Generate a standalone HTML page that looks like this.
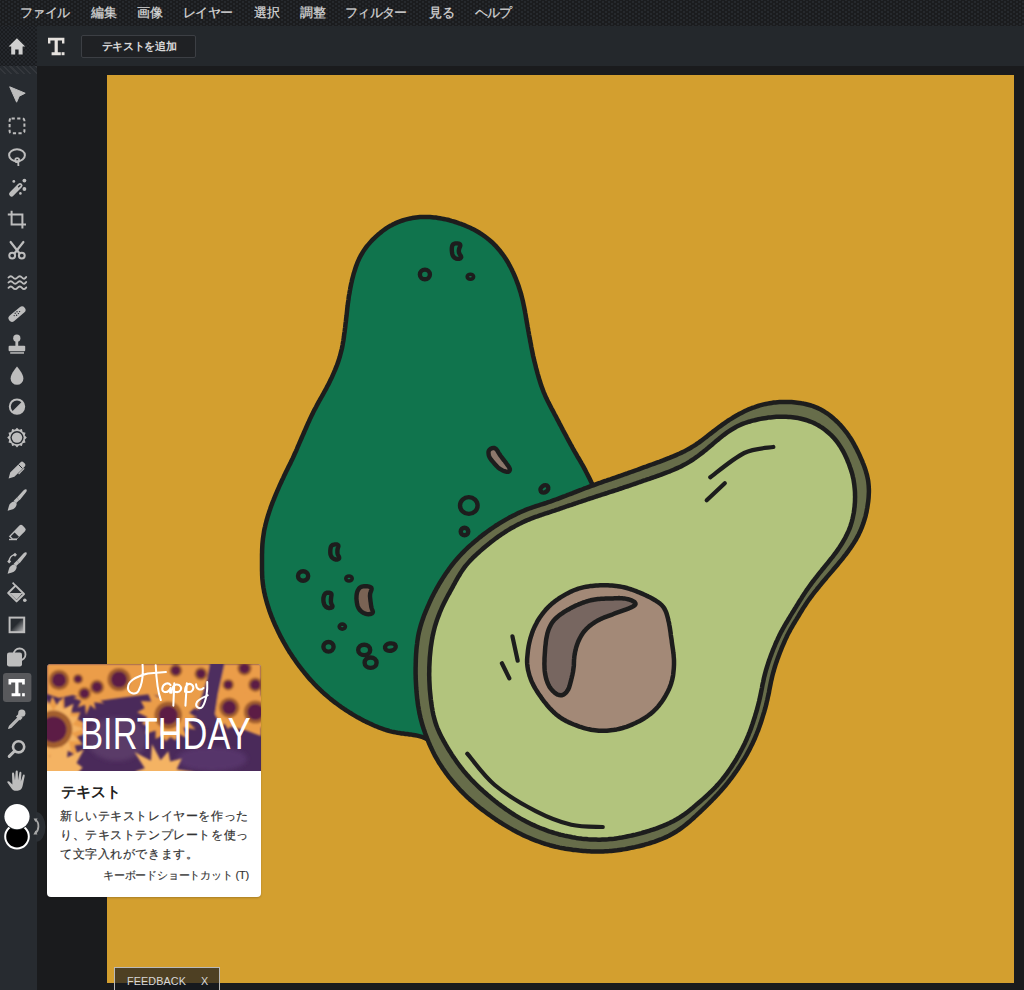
<!DOCTYPE html>
<html><head><meta charset="utf-8">
<style>
*{box-sizing:border-box}
html,body{margin:0;padding:0;width:1024px;height:990px;overflow:hidden;background:#1a1b1d;font-family:"Liberation Sans",sans-serif}
.abs{position:absolute}
#menu{left:0;top:0;width:1024px;height:26px;background:radial-gradient(circle,#26292d 0.9px,transparent 1.1px) 0 0/6px 4px,radial-gradient(circle,#26292d 0.9px,transparent 1.1px) 3px 2px/6px 4px,#1b1c1e}
#menu span{position:absolute;top:4px;font-size:13px;color:#d6d6d6;line-height:17px;white-space:nowrap;-webkit-text-stroke:0.25px #d6d6d6}
#tb{left:0;top:26px;width:1024px;height:40px;background:#24282c}
#home{left:0;top:26px;width:37px;height:40px;background:radial-gradient(circle,#1a1c1f 0.9px,transparent 1.1px) 0 0/4px 4px,radial-gradient(circle,#1a1c1f 0.9px,transparent 1.1px) 2px 2px/4px 4px,#24272c}
#hatch{left:0;top:66px;width:37px;height:8px;background:repeating-linear-gradient(45deg,#272b30 0 3px,#34373c 3px 4.5px)}
#addtxt{left:81px;top:35px;width:115px;height:23px;border:1px solid #3c3f44;border-radius:2px;background:#1f2124;color:#d8d8d8;font-size:11px;font-weight:bold;text-align:center;line-height:21px;letter-spacing:-0.3px;padding-left:1px}
#left{left:0;top:74px;width:37px;height:916px;background:#272b30}
#canvas{left:107px;top:75px;width:907px;height:908px;background:#d39f2f;overflow:hidden}
#card{left:47px;top:664px;width:214px;height:233px;background:#fff;border-radius:4px;overflow:hidden;box-shadow:0 1px 2px rgba(0,0,0,.2)}
#card h3{position:absolute;left:13.5px;top:118.5px;margin:0;font-size:14.5px;font-weight:bold;color:#222;line-height:18px}
#card p{position:absolute;left:13px;top:142.5px;letter-spacing:0.58px;-webkit-text-stroke:0.2px #333;width:210px;white-space:nowrap;margin:0;font-size:12px;color:#333;line-height:19px}
#card .kb{position:absolute;right:12px;top:204px;font-size:11px;letter-spacing:-0.2px;-webkit-text-stroke:0.15px #333;color:#333;line-height:14px}
#fb{left:114px;top:967px;width:106px;height:30px;border:1px solid #b9b9b9;background:rgba(22,24,30,.7);color:#d8d8d8;font-size:10.8px;letter-spacing:0.1px;line-height:14px}
</style></head><body>
<div id="menu" class="abs">
<span style="left:19.5px;letter-spacing:-0.5px">ファイル</span>
<span style="left:91px">編集</span>
<span style="left:137px">画像</span>
<span style="left:182.5px;letter-spacing:-0.5px">レイヤー</span>
<span style="left:254px">選択</span>
<span style="left:300px">調整</span>
<span style="left:345px;letter-spacing:-0.7px">フィルター</span>
<span style="left:429px">見る</span>
<span style="left:475px;letter-spacing:-0.8px">ヘルプ</span>
</div>
<div id="tb" class="abs"></div>
<div id="home" class="abs"></div>
<div id="hatch" class="abs"></div>
<svg class="abs" style="left:0;top:26px" width="80" height="40" viewBox="0 26 80 40">
<path d="M16.9 38.2 L25.2 46.6 L22.6 46.6 L22.6 54.4 L18.6 54.4 L18.6 49.6 L15.2 49.6 L15.2 54.4 L11.2 54.4 L11.2 46.6 L8.6 46.6 Z" fill="#cfcfcf"/>
<path d="M48 37.8 H64.4 V43.4 H62 V40.6 H57.8 V52.2 H60.8 V55.2 H51.6 V52.2 H54.6 V40.6 H50.4 V43.4 H48 Z" fill="#e6e2de"/>
<rect x="61.6" y="52.2" width="2.9" height="3" fill="#e6e2de"/>
</svg>

<div id="addtxt" class="abs">テキストを追加</div>
<div id="left" class="abs"></div>
<div id="canvas" class="abs"><svg width="907" height="908" viewBox="0 0 907 908" style="position:absolute;left:0;top:0"><path d="M321.0 141.9 L323.0 142.0 L325.0 142.2 L326.9 142.4 L328.9 142.6 L330.9 142.9 L332.9 143.2 L334.8 143.6 L336.8 144.0 L338.7 144.4 L340.7 144.8 L342.6 145.3 L344.5 145.9 L346.4 146.4 L348.3 147.0 L350.2 147.6 L352.1 148.3 L354.0 148.9 L355.9 149.7 L357.7 150.4 L359.6 151.2 L361.4 152.0 L363.2 152.8 L365.0 153.7 L366.8 154.6 L368.5 155.5 L370.3 156.5 L372.0 157.5 L373.7 158.6 L375.3 159.7 L377.0 160.8 L378.6 162.0 L380.2 163.2 L381.7 164.4 L383.2 165.7 L384.7 167.0 L386.2 168.4 L387.6 169.8 L389.0 171.2 L390.3 172.7 L391.6 174.2 L392.9 175.7 L394.1 177.3 L395.3 178.9 L396.5 180.5 L397.6 182.1 L398.7 183.8 L399.8 185.5 L400.8 187.2 L401.8 188.9 L402.7 190.7 L403.7 192.5 L404.6 194.2 L405.4 196.0 L406.3 197.8 L407.1 199.7 L407.9 201.5 L408.7 203.3 L409.4 205.2 L410.1 207.1 L410.8 208.9 L411.5 210.8 L412.1 212.7 L412.7 214.6 L413.3 216.5 L413.9 218.4 L414.4 220.4 L414.9 222.3 L415.4 224.2 L415.9 226.2 L416.3 228.1 L416.7 230.1 L417.1 232.0 L417.5 234.0 L417.9 236.0 L418.2 237.9 L418.6 239.9 L418.9 241.9 L419.2 243.8 L419.6 245.8 L419.9 247.8 L420.3 249.8 L420.6 251.7 L421.0 253.7 L421.3 255.7 L421.7 257.6 L422.0 259.6 L422.4 261.6 L422.8 263.5 L423.1 265.5 L423.5 267.5 L423.9 269.4 L424.2 271.4 L424.6 273.4 L425.0 275.3 L425.4 277.3 L425.8 279.2 L426.2 281.2 L426.7 283.1 L427.1 285.1 L427.6 287.0 L428.1 289.0 L428.6 290.9 L429.0 292.9 L429.6 294.8 L430.1 296.7 L430.6 298.6 L431.2 300.6 L431.7 302.5 L432.3 304.4 L432.9 306.3 L433.5 308.2 L434.1 310.1 L434.8 312.0 L435.5 313.9 L436.2 315.7 L436.9 317.6 L437.7 319.4 L438.5 321.3 L439.3 323.1 L440.2 324.9 L441.1 326.7 L442.0 328.4 L442.9 330.2 L443.8 332.0 L444.7 333.8 L445.7 335.5 L446.6 337.3 L447.5 339.1 L448.5 340.8 L449.4 342.6 L450.3 344.4 L451.3 346.2 L452.2 347.9 L453.1 349.7 L454.1 351.5 L455.0 353.2 L455.9 355.0 L456.9 356.8 L457.8 358.5 L458.8 360.3 L459.7 362.1 L460.6 363.8 L461.6 365.6 L462.5 367.3 L463.5 369.1 L464.5 370.8 L465.4 372.6 L466.4 374.3 L467.4 376.1 L468.4 377.8 L469.4 379.5 L470.4 381.3 L471.4 383.0 L472.4 384.7 L473.4 386.4 L474.4 388.2 L475.4 389.9 L476.4 391.7 L477.3 393.4 L478.3 395.2 L479.2 397.0 L480.1 398.7 L481.0 400.5 L481.9 402.3 L482.8 404.1 L483.7 405.9 L484.6 407.7 L485.5 409.4 L486.4 411.2 L487.4 413.0 L488.4 414.7 L489.4 416.4 L490.4 418.1 L491.5 419.8 L492.6 421.5 L493.7 423.2 L494.8 424.8 L495.9 426.5 L497.0 428.1 L498.1 429.8 L499.2 431.4 L500.3 433.1 L501.4 434.8 L502.5 436.5 L503.5 438.2 L504.5 439.9 L505.5 441.7 L506.4 443.4 L507.3 445.2 L508.2 447.0 L509.0 448.8 L509.8 450.6 L510.5 452.5 L511.1 454.4 L511.7 456.3 L512.2 458.2 L512.7 460.1 L513.1 462.0 L513.4 464.0 L513.7 466.0 L513.9 467.9 L514.0 469.9 L514.0 471.9 L514.0 473.9 L513.9 475.8 L513.7 477.8 L513.5 479.8 L513.2 481.7 L512.8 483.7 L512.4 485.6 L511.9 487.6 L511.4 489.5 L510.9 491.4 L510.3 493.3 L509.7 495.2 L509.1 497.1 L508.4 499.0 L507.7 500.9 L507.0 502.8 L506.3 504.6 L505.6 506.5 L504.8 508.3 L504.0 510.2 L503.3 512.0 L502.5 513.8 L501.6 515.7 L500.8 517.5 L500.0 519.3 L499.1 521.1 L498.3 522.9 L497.4 524.7 L496.5 526.5 L495.7 528.3 L494.8 530.1 L493.9 531.9 L493.0 533.7 L492.1 535.5 L491.1 537.2 L490.2 539.0 L489.3 540.8 L488.3 542.5 L487.4 544.3 L486.4 546.1 L485.5 547.8 L484.5 549.6 L483.5 551.3 L482.5 553.0 L481.5 554.8 L480.5 556.5 L479.5 558.2 L478.5 560.0 L477.5 561.7 L476.5 563.4 L475.5 565.1 L474.4 566.9 L473.4 568.6 L472.4 570.3 L471.3 572.0 L470.3 573.7 L469.2 575.4 L468.1 577.1 L467.1 578.7 L466.0 580.4 L464.9 582.1 L463.8 583.8 L462.7 585.5 L461.6 587.1 L460.5 588.8 L459.4 590.4 L458.3 592.1 L457.1 593.7 L456.0 595.4 L454.8 597.0 L453.7 598.7 L452.5 600.3 L451.4 601.9 L450.2 603.5 L449.0 605.1 L447.8 606.7 L446.6 608.3 L445.4 609.9 L444.1 611.5 L442.9 613.1 L441.7 614.6 L440.4 616.2 L439.1 617.7 L437.8 619.2 L436.5 620.7 L435.2 622.2 L433.8 623.7 L432.5 625.2 L431.1 626.6 L429.7 628.0 L428.3 629.4 L426.8 630.8 L425.3 632.1 L423.8 633.4 L422.3 634.7 L420.8 636.0 L419.2 637.2 L417.6 638.4 L416.0 639.6 L414.4 640.8 L412.7 641.9 L411.1 643.0 L409.4 644.1 L407.7 645.2 L406.0 646.2 L404.3 647.2 L402.5 648.2 L400.8 649.1 L399.0 650.1 L397.2 651.0 L395.4 651.8 L393.6 652.7 L391.8 653.6 L390.0 654.4 L388.2 655.2 L386.3 656.0 L384.5 656.7 L382.6 657.5 L380.8 658.2 L378.9 658.9 L377.0 659.6 L375.1 660.2 L373.2 660.9 L371.3 661.5 L369.4 662.2 L367.5 662.8 L365.6 663.4 L363.7 664.0 L361.8 664.5 L359.9 665.1 L358.0 665.7 L356.1 666.2 L354.1 666.8 L352.2 667.3 L350.3 667.8 L348.3 668.3 L346.4 668.8 L344.5 669.2 L342.6 669.6 L340.6 669.9 L338.7 670.1 L336.8 670.1 L335.0 670.0 L333.1 669.8 L331.3 669.4 L329.5 668.9 L327.8 668.2 L326.1 667.4 L324.4 666.5 L322.7 665.6 L321.0 664.7 L319.3 663.8 L317.6 663.0 L315.8 662.2 L314.0 661.6 L312.1 661.1 L310.2 660.6 L308.3 660.2 L306.3 659.9 L304.4 659.6 L302.4 659.4 L300.4 659.1 L298.4 658.9 L296.4 658.6 L294.5 658.4 L292.5 658.1 L290.5 657.8 L288.6 657.4 L286.6 657.0 L284.7 656.6 L282.7 656.1 L280.8 655.5 L278.9 655.0 L277.0 654.3 L275.1 653.7 L273.3 653.0 L271.4 652.3 L269.6 651.5 L267.7 650.8 L265.9 650.0 L264.1 649.1 L262.3 648.3 L260.5 647.4 L258.7 646.6 L256.9 645.7 L255.1 644.7 L253.3 643.8 L251.6 642.8 L249.8 641.9 L248.1 640.9 L246.4 639.9 L244.7 638.8 L243.0 637.8 L241.3 636.7 L239.6 635.6 L237.9 634.5 L236.3 633.4 L234.6 632.3 L233.0 631.1 L231.4 630.0 L229.8 628.8 L228.2 627.6 L226.6 626.4 L225.0 625.1 L223.4 623.9 L221.9 622.6 L220.4 621.3 L218.9 620.0 L217.4 618.7 L215.9 617.4 L214.4 616.0 L213.0 614.6 L211.5 613.2 L210.1 611.8 L208.7 610.4 L207.3 609.0 L206.0 607.5 L204.6 606.0 L203.3 604.6 L201.9 603.1 L200.6 601.5 L199.4 600.0 L198.1 598.5 L196.8 596.9 L195.6 595.4 L194.4 593.8 L193.1 592.2 L191.9 590.6 L190.7 589.0 L189.6 587.4 L188.4 585.7 L187.3 584.1 L186.1 582.5 L185.0 580.8 L183.9 579.1 L182.8 577.5 L181.8 575.8 L180.7 574.1 L179.7 572.4 L178.7 570.6 L177.7 568.9 L176.7 567.2 L175.7 565.4 L174.8 563.6 L173.8 561.9 L172.9 560.1 L172.0 558.3 L171.2 556.5 L170.3 554.7 L169.5 552.9 L168.6 551.1 L167.8 549.3 L167.0 547.4 L166.2 545.6 L165.5 543.7 L164.7 541.9 L164.0 540.0 L163.3 538.1 L162.6 536.3 L162.0 534.4 L161.4 532.5 L160.8 530.6 L160.2 528.7 L159.6 526.7 L159.1 524.8 L158.6 522.9 L158.1 521.0 L157.7 519.0 L157.2 517.1 L156.9 515.1 L156.5 513.1 L156.2 511.2 L155.9 509.2 L155.7 507.2 L155.5 505.2 L155.3 503.2 L155.2 501.2 L155.1 499.3 L155.1 497.3 L155.0 495.3 L155.0 493.3 L155.0 491.3 L155.0 489.3 L155.0 487.3 L155.0 485.3 L155.0 483.3 L155.0 481.3 L155.0 479.3 L155.1 477.3 L155.1 475.3 L155.2 473.3 L155.3 471.3 L155.4 469.3 L155.6 467.3 L155.8 465.3 L156.0 463.3 L156.3 461.4 L156.6 459.4 L156.9 457.4 L157.2 455.4 L157.6 453.5 L158.1 451.5 L158.5 449.6 L159.0 447.7 L159.5 445.7 L160.1 443.8 L160.6 441.9 L161.2 440.0 L161.8 438.1 L162.4 436.2 L163.1 434.3 L163.7 432.4 L164.4 430.5 L165.1 428.6 L165.8 426.8 L166.6 424.9 L167.3 423.1 L168.1 421.2 L168.8 419.4 L169.6 417.5 L170.4 415.7 L171.2 413.9 L172.0 412.0 L172.8 410.2 L173.6 408.4 L174.5 406.6 L175.3 404.7 L176.2 402.9 L177.0 401.1 L177.9 399.3 L178.7 397.5 L179.6 395.7 L180.5 393.9 L181.4 392.1 L182.3 390.3 L183.2 388.6 L184.0 386.8 L184.9 385.0 L185.8 383.1 L186.6 381.3 L187.4 379.5 L188.2 377.7 L189.1 375.9 L189.9 374.0 L190.6 372.2 L191.4 370.4 L192.2 368.5 L193.0 366.7 L193.8 364.8 L194.6 363.0 L195.4 361.2 L196.2 359.3 L197.0 357.5 L197.8 355.7 L198.6 353.8 L199.4 352.0 L200.2 350.2 L201.0 348.3 L201.9 346.5 L202.7 344.7 L203.5 342.9 L204.4 341.1 L205.3 339.3 L206.1 337.5 L207.0 335.7 L208.0 333.9 L208.9 332.2 L209.8 330.4 L210.8 328.6 L211.7 326.9 L212.7 325.2 L213.7 323.4 L214.7 321.7 L215.7 319.9 L216.6 318.2 L217.6 316.4 L218.6 314.7 L219.5 312.9 L220.4 311.1 L221.4 309.4 L222.3 307.6 L223.1 305.8 L224.0 304.0 L224.9 302.2 L225.7 300.4 L226.5 298.5 L227.3 296.7 L228.1 294.9 L228.8 293.0 L229.6 291.2 L230.3 289.3 L231.0 287.4 L231.6 285.5 L232.2 283.6 L232.8 281.7 L233.3 279.8 L233.8 277.9 L234.3 275.9 L234.8 274.0 L235.2 272.0 L235.6 270.1 L235.9 268.1 L236.3 266.1 L236.6 264.2 L236.9 262.2 L237.1 260.2 L237.4 258.2 L237.7 256.3 L237.9 254.3 L238.2 252.3 L238.4 250.3 L238.6 248.3 L238.9 246.3 L239.1 244.3 L239.3 242.4 L239.6 240.4 L239.8 238.4 L240.0 236.4 L240.2 234.4 L240.4 232.4 L240.7 230.4 L240.9 228.4 L241.2 226.5 L241.5 224.5 L241.7 222.5 L242.0 220.5 L242.4 218.6 L242.7 216.6 L243.1 214.6 L243.4 212.7 L243.8 210.7 L244.2 208.7 L244.7 206.8 L245.1 204.8 L245.6 202.9 L246.1 201.0 L246.6 199.0 L247.2 197.1 L247.8 195.2 L248.4 193.3 L249.0 191.4 L249.7 189.6 L250.4 187.7 L251.2 185.9 L252.0 184.1 L252.9 182.3 L253.8 180.5 L254.8 178.8 L255.8 177.1 L256.9 175.4 L258.0 173.8 L259.2 172.2 L260.4 170.6 L261.7 169.1 L263.0 167.6 L264.3 166.1 L265.7 164.7 L267.1 163.3 L268.6 161.9 L270.0 160.6 L271.5 159.3 L273.1 158.0 L274.6 156.7 L276.2 155.5 L277.8 154.4 L279.5 153.2 L281.1 152.2 L282.8 151.1 L284.6 150.2 L286.3 149.3 L288.1 148.4 L289.9 147.6 L291.8 146.8 L293.6 146.1 L295.5 145.5 L297.4 144.9 L299.3 144.4 L301.3 143.9 L303.2 143.5 L305.1 143.1 L307.1 142.8 L309.1 142.5 L311.1 142.3 L313.0 142.1 L315.0 142.0 L317.0 141.9 L319.0 141.9Z" fill="#10744d" stroke="#1d1d1d" stroke-width="4.5" stroke-linejoin="round" stroke-linecap="round"/>
<ellipse cx="317.9" cy="199.4" rx="5.0" ry="4.8" transform="rotate(0 317.9 199.4)" fill="#10744d" stroke="#1d1d1d" stroke-width="4.4" stroke-linejoin="round" stroke-linecap="round"/>
<ellipse cx="363.4" cy="201.7" rx="3.2" ry="2.5" transform="rotate(0 363.4 201.7)" fill="#10744d" stroke="#1d1d1d" stroke-width="3.6" stroke-linejoin="round" stroke-linecap="round"/>
<ellipse cx="361.8" cy="430.5" rx="8.8" ry="8.4" transform="rotate(0 361.8 430.5)" fill="#10744d" stroke="#1d1d1d" stroke-width="4.4" stroke-linejoin="round" stroke-linecap="round"/>
<ellipse cx="357.5" cy="456.5" rx="3.8" ry="3.8" transform="rotate(0 357.5 456.5)" fill="#10744d" stroke="#1d1d1d" stroke-width="4.4" stroke-linejoin="round" stroke-linecap="round"/>
<ellipse cx="437.4" cy="413.9" rx="4.3" ry="3.3" transform="rotate(-35 437.4 413.9)" fill="#10744d" stroke="#1d1d1d" stroke-width="4.4" stroke-linejoin="round" stroke-linecap="round"/>
<ellipse cx="196.1" cy="501.0" rx="5.1" ry="4.7" transform="rotate(0 196.1 501.0)" fill="#10744d" stroke="#1d1d1d" stroke-width="4.4" stroke-linejoin="round" stroke-linecap="round"/>
<ellipse cx="242.0" cy="503.5" rx="3.2" ry="2.5" transform="rotate(0 242.0 503.5)" fill="#10744d" stroke="#1d1d1d" stroke-width="3.6" stroke-linejoin="round" stroke-linecap="round"/>
<ellipse cx="235.3" cy="551.6" rx="3.1" ry="2.5" transform="rotate(0 235.3 551.6)" fill="#10744d" stroke="#1d1d1d" stroke-width="3.6" stroke-linejoin="round" stroke-linecap="round"/>
<ellipse cx="221.5" cy="571.8" rx="5.1" ry="4.8" transform="rotate(0 221.5 571.8)" fill="#10744d" stroke="#1d1d1d" stroke-width="4.4" stroke-linejoin="round" stroke-linecap="round"/>
<ellipse cx="257.2" cy="574.9" rx="6.0" ry="5.2" transform="rotate(0 257.2 574.9)" fill="#10744d" stroke="#1d1d1d" stroke-width="4.4" stroke-linejoin="round" stroke-linecap="round"/>
<ellipse cx="263.6" cy="587.7" rx="6.0" ry="5.2" transform="rotate(0 263.6 587.7)" fill="#10744d" stroke="#1d1d1d" stroke-width="4.4" stroke-linejoin="round" stroke-linecap="round"/>
<ellipse cx="283.4" cy="572.1" rx="5.4" ry="3.7" transform="rotate(-10 283.4 572.1)" fill="#10744d" stroke="#1d1d1d" stroke-width="4.4" stroke-linejoin="round" stroke-linecap="round"/>
<path d="M348.5 168.4 L349.5 168.4 L350.5 168.4 L351.5 168.6 L352.4 168.9 L353.1 169.5 L353.3 170.3 L353.2 171.2 L352.8 172.1 L352.4 173.0 L352.1 174.0 L351.9 175.0 L351.8 176.0 L351.9 177.0 L352.1 177.9 L352.5 178.8 L353.0 179.7 L353.6 180.5 L354.0 181.4 L354.2 182.2 L353.8 182.9 L353.1 183.5 L352.1 183.8 L351.2 183.9 L350.2 183.9 L349.2 183.7 L348.3 183.2 L347.5 182.7 L346.8 182.0 L346.2 181.2 L345.7 180.3 L345.4 179.3 L345.2 178.4 L345.0 177.4 L344.9 176.4 L344.8 175.4 L344.8 174.4 L344.8 173.4 L344.9 172.4 L345.1 171.4 L345.4 170.4 L345.9 169.6 L346.7 169.0 L347.5 168.6Z" fill="#10744d" stroke="#1d1d1d" stroke-width="4.4" stroke-linejoin="round" stroke-linecap="round"/>
<path d="M227.0 469.6 L228.0 469.4 L229.0 469.4 L230.0 469.5 L230.8 469.9 L231.3 470.5 L231.4 471.4 L231.1 472.4 L230.8 473.3 L230.6 474.3 L230.4 475.3 L230.4 476.3 L230.4 477.3 L230.5 478.3 L230.7 479.3 L231.1 480.2 L231.6 481.1 L232.0 482.0 L232.2 482.9 L232.0 483.6 L231.3 484.2 L230.4 484.5 L229.4 484.6 L228.4 484.5 L227.4 484.2 L226.5 483.7 L225.8 483.1 L225.0 482.4 L224.4 481.6 L224.0 480.7 L223.6 479.7 L223.4 478.7 L223.3 477.7 L223.3 476.7 L223.3 475.7 L223.4 474.7 L223.5 473.7 L223.7 472.7 L224.0 471.7 L224.5 470.9 L225.2 470.2 L226.0 469.8Z" fill="#10744d" stroke="#1d1d1d" stroke-width="4.4" stroke-linejoin="round" stroke-linecap="round"/>
<path d="M220.0 517.7 L221.0 517.6 L222.0 517.7 L223.0 517.9 L223.8 518.3 L224.4 519.0 L224.5 519.9 L224.4 520.8 L224.2 521.8 L224.1 522.8 L224.0 523.8 L223.9 524.9 L223.9 525.9 L223.9 526.9 L224.1 527.9 L224.4 528.8 L224.9 529.7 L225.3 530.6 L225.5 531.5 L225.2 532.2 L224.4 532.6 L223.5 532.9 L222.5 533.0 L221.5 533.0 L220.5 532.7 L219.7 532.3 L218.9 531.7 L218.2 530.9 L217.6 530.1 L217.2 529.2 L216.9 528.2 L216.6 527.2 L216.5 526.2 L216.4 525.2 L216.4 524.2 L216.4 523.2 L216.6 522.2 L216.9 521.2 L217.2 520.2 L217.7 519.4 L218.3 518.6 L219.1 518.0Z" fill="#10744d" stroke="#1d1d1d" stroke-width="4.4" stroke-linejoin="round" stroke-linecap="round"/>
<path d="M255.0 511.6 L256.0 511.4 L257.0 511.3 L258.0 511.3 L259.0 511.3 L260.0 511.3 L261.0 511.4 L262.0 511.6 L262.9 511.9 L263.8 512.3 L264.4 512.9 L264.6 513.8 L264.5 514.7 L264.2 515.6 L263.8 516.5 L263.5 517.5 L263.2 518.4 L263.1 519.4 L263.0 520.4 L263.0 521.4 L263.1 522.4 L263.2 523.4 L263.3 524.4 L263.4 525.4 L263.5 526.4 L263.7 527.4 L263.8 528.4 L263.9 529.4 L264.1 530.4 L264.2 531.4 L264.4 532.4 L264.7 533.4 L265.0 534.3 L265.4 535.2 L265.7 536.1 L265.9 537.0 L265.6 537.8 L265.0 538.4 L264.2 538.8 L263.2 539.0 L262.2 539.2 L261.2 539.2 L260.2 539.1 L259.3 539.0 L258.3 538.7 L257.4 538.3 L256.5 537.9 L255.6 537.3 L254.8 536.8 L254.0 536.1 L253.3 535.5 L252.6 534.7 L252.0 533.9 L251.5 533.1 L251.1 532.2 L250.7 531.2 L250.4 530.3 L250.2 529.3 L250.0 528.3 L249.8 527.3 L249.7 526.3 L249.6 525.3 L249.5 524.3 L249.4 523.3 L249.5 522.3 L249.5 521.3 L249.6 520.3 L249.7 519.3 L249.9 518.3 L250.1 517.4 L250.4 516.4 L250.8 515.5 L251.3 514.6 L251.8 513.8 L252.5 513.0 L253.2 512.4 L254.1 511.9Z" fill="#7a6354" stroke="#1d1d1d" stroke-width="4.4" stroke-linejoin="round" stroke-linecap="round"/>
<path d="M382.2 375.1 L382.8 374.4 L383.6 373.8 L384.5 373.4 L385.4 373.1 L386.4 372.9 L387.4 373.0 L388.3 373.4 L389.0 374.0 L389.7 374.7 L390.3 375.5 L390.8 376.4 L391.3 377.3 L391.8 378.1 L392.4 379.0 L392.9 379.8 L393.5 380.7 L394.1 381.5 L394.7 382.3 L395.3 383.1 L395.9 383.9 L396.5 384.7 L397.2 385.5 L397.8 386.3 L398.4 387.1 L399.0 387.9 L399.6 388.8 L400.2 389.6 L400.8 390.4 L401.4 391.2 L401.9 392.0 L402.4 392.9 L402.8 393.8 L402.9 394.8 L402.6 395.6 L402.1 396.3 L401.3 396.7 L400.4 396.8 L399.4 396.7 L398.4 396.5 L397.5 396.1 L396.5 395.8 L395.6 395.4 L394.7 394.9 L393.8 394.4 L392.9 393.9 L392.1 393.3 L391.3 392.7 L390.6 392.0 L389.9 391.3 L389.2 390.6 L388.5 389.8 L387.8 389.1 L387.1 388.3 L386.5 387.5 L385.8 386.8 L385.2 386.0 L384.5 385.2 L383.9 384.4 L383.4 383.6 L382.8 382.7 L382.4 381.8 L382.0 380.9 L381.7 379.9 L381.6 378.9 L381.5 377.9 L381.5 376.9 L381.7 376.0Z" fill="#8d786c" stroke="#1d1d1d" stroke-width="4.4" stroke-linejoin="round" stroke-linecap="round"/>
<path d="M678.5 326.9 L680.5 326.9 L682.5 327.0 L684.5 327.1 L686.5 327.3 L688.5 327.5 L690.4 327.7 L692.4 327.9 L694.4 328.3 L696.4 328.6 L698.3 329.0 L700.2 329.5 L702.2 330.0 L704.1 330.5 L706.0 331.2 L707.8 331.9 L709.7 332.6 L711.5 333.4 L713.3 334.3 L715.0 335.2 L716.7 336.2 L718.4 337.3 L720.1 338.4 L721.7 339.5 L723.3 340.7 L724.8 342.0 L726.3 343.3 L727.8 344.6 L729.3 346.0 L730.7 347.3 L732.1 348.8 L733.5 350.2 L734.8 351.7 L736.1 353.2 L737.4 354.8 L738.6 356.3 L739.8 357.9 L741.0 359.5 L742.1 361.2 L743.2 362.8 L744.3 364.5 L745.3 366.2 L746.3 368.0 L747.3 369.7 L748.2 371.5 L749.2 373.2 L750.1 375.0 L750.9 376.8 L751.8 378.6 L752.7 380.4 L753.5 382.3 L754.3 384.1 L755.1 385.9 L755.8 387.8 L756.6 389.7 L757.3 391.5 L757.9 393.4 L758.6 395.3 L759.1 397.2 L759.7 399.1 L760.2 401.1 L760.6 403.0 L761.0 404.9 L761.3 406.9 L761.5 408.9 L761.7 410.9 L761.8 412.8 L761.9 414.8 L761.9 416.8 L761.8 418.8 L761.7 420.8 L761.6 422.8 L761.4 424.8 L761.2 426.7 L760.9 428.7 L760.6 430.7 L760.3 432.7 L759.9 434.6 L759.6 436.6 L759.1 438.6 L758.7 440.5 L758.2 442.4 L757.6 444.3 L757.0 446.2 L756.4 448.1 L755.7 450.0 L755.0 451.9 L754.3 453.7 L753.5 455.6 L752.6 457.4 L751.8 459.2 L750.9 461.0 L749.9 462.7 L749.0 464.5 L747.9 466.2 L746.9 467.9 L745.8 469.6 L744.7 471.2 L743.6 472.9 L742.4 474.5 L741.3 476.1 L740.1 477.7 L738.9 479.3 L737.6 480.9 L736.4 482.5 L735.2 484.1 L733.9 485.6 L732.6 487.2 L731.4 488.7 L730.1 490.3 L728.8 491.8 L727.5 493.3 L726.2 494.8 L724.9 496.4 L723.6 497.9 L722.3 499.4 L721.0 500.9 L719.7 502.4 L718.4 504.0 L717.1 505.5 L715.8 507.0 L714.5 508.6 L713.3 510.1 L712.0 511.7 L710.7 513.2 L709.5 514.8 L708.2 516.4 L707.0 517.9 L705.8 519.5 L704.6 521.1 L703.4 522.7 L702.2 524.3 L701.0 526.0 L699.9 527.6 L698.8 529.3 L697.7 531.0 L696.6 532.6 L695.5 534.3 L694.5 536.0 L693.4 537.7 L692.4 539.5 L691.4 541.2 L690.3 542.9 L689.3 544.6 L688.2 546.3 L687.2 548.0 L686.2 549.7 L685.2 551.5 L684.2 553.2 L683.2 554.9 L682.3 556.7 L681.3 558.5 L680.4 560.2 L679.6 562.0 L678.7 563.9 L677.9 565.7 L677.1 567.5 L676.3 569.3 L675.5 571.2 L674.7 573.0 L674.0 574.9 L673.2 576.8 L672.5 578.6 L671.8 580.5 L671.1 582.4 L670.4 584.3 L669.8 586.1 L669.1 588.0 L668.5 589.9 L667.9 591.8 L667.3 593.8 L666.8 595.7 L666.2 597.6 L665.7 599.5 L665.2 601.5 L664.8 603.4 L664.3 605.4 L663.9 607.3 L663.5 609.3 L663.1 611.3 L662.7 613.2 L662.3 615.2 L662.0 617.2 L661.6 619.1 L661.1 621.1 L660.7 623.0 L660.3 625.0 L659.8 626.9 L659.4 628.9 L658.9 630.8 L658.4 632.8 L657.8 634.7 L657.3 636.6 L656.7 638.5 L656.1 640.4 L655.5 642.4 L654.9 644.3 L654.3 646.2 L653.7 648.1 L653.0 650.0 L652.4 651.8 L651.7 653.7 L651.0 655.6 L650.2 657.5 L649.5 659.3 L648.7 661.2 L648.0 663.0 L647.2 664.8 L646.3 666.7 L645.5 668.5 L644.6 670.3 L643.7 672.1 L642.8 673.9 L641.9 675.6 L640.9 677.4 L640.0 679.1 L639.0 680.9 L638.0 682.6 L637.0 684.3 L635.9 686.0 L634.9 687.7 L633.8 689.4 L632.7 691.1 L631.6 692.8 L630.5 694.5 L629.4 696.1 L628.2 697.7 L627.0 699.4 L625.9 701.0 L624.7 702.6 L623.5 704.2 L622.2 705.8 L621.0 707.4 L619.8 708.9 L618.5 710.5 L617.2 712.0 L615.9 713.5 L614.6 715.0 L613.3 716.5 L611.9 718.0 L610.6 719.5 L609.2 720.9 L607.8 722.4 L606.4 723.8 L605.0 725.3 L603.6 726.7 L602.2 728.1 L600.8 729.5 L599.4 730.9 L597.9 732.3 L596.5 733.7 L595.0 735.1 L593.6 736.5 L592.1 737.9 L590.7 739.2 L589.2 740.6 L587.7 741.9 L586.3 743.3 L584.8 744.6 L583.3 745.9 L581.7 747.2 L580.2 748.5 L578.7 749.8 L577.1 751.0 L575.5 752.2 L573.9 753.4 L572.2 754.6 L570.6 755.7 L568.9 756.8 L567.2 757.8 L565.5 758.8 L563.7 759.8 L562.0 760.7 L560.2 761.6 L558.4 762.4 L556.5 763.2 L554.7 764.0 L552.9 764.7 L551.0 765.4 L549.1 766.1 L547.2 766.8 L545.3 767.4 L543.4 768.0 L541.5 768.6 L539.6 769.1 L537.6 769.7 L535.7 770.2 L533.8 770.7 L531.8 771.2 L529.9 771.6 L527.9 772.1 L526.0 772.5 L524.0 772.9 L522.1 773.3 L520.1 773.7 L518.1 774.1 L516.2 774.4 L514.2 774.7 L512.2 775.0 L510.2 775.3 L508.2 775.5 L506.2 775.7 L504.2 775.9 L502.3 776.1 L500.3 776.2 L498.3 776.3 L496.3 776.4 L494.3 776.5 L492.3 776.5 L490.3 776.5 L488.3 776.5 L486.3 776.4 L484.3 776.4 L482.3 776.3 L480.3 776.2 L478.3 776.0 L476.3 775.9 L474.3 775.7 L472.3 775.6 L470.3 775.3 L468.3 775.1 L466.3 774.9 L464.3 774.6 L462.4 774.3 L460.4 774.0 L458.4 773.7 L456.4 773.3 L454.5 773.0 L452.5 772.6 L450.6 772.1 L448.6 771.7 L446.7 771.2 L444.7 770.7 L442.8 770.2 L440.9 769.6 L439.0 769.1 L437.0 768.5 L435.1 767.8 L433.3 767.2 L431.4 766.5 L429.5 765.8 L427.6 765.1 L425.8 764.4 L423.9 763.6 L422.1 762.8 L420.2 762.0 L418.4 761.2 L416.6 760.4 L414.8 759.5 L413.0 758.6 L411.2 757.7 L409.4 756.8 L407.7 755.8 L405.9 754.9 L404.2 753.9 L402.4 752.9 L400.7 751.9 L399.0 750.9 L397.3 749.9 L395.6 748.8 L393.9 747.7 L392.2 746.7 L390.5 745.6 L388.8 744.5 L387.2 743.3 L385.5 742.2 L383.9 741.0 L382.3 739.9 L380.6 738.7 L379.0 737.5 L377.4 736.3 L375.8 735.1 L374.2 733.9 L372.7 732.7 L371.1 731.4 L369.5 730.2 L368.0 728.9 L366.5 727.6 L365.0 726.3 L363.4 725.0 L362.0 723.7 L360.5 722.3 L359.0 720.9 L357.6 719.5 L356.2 718.1 L354.8 716.7 L353.4 715.3 L352.0 713.8 L350.7 712.3 L349.3 710.8 L348.0 709.3 L346.7 707.8 L345.4 706.3 L344.2 704.7 L342.9 703.1 L341.7 701.6 L340.5 700.0 L339.3 698.4 L338.1 696.7 L337.0 695.1 L335.8 693.5 L334.7 691.8 L333.6 690.1 L332.5 688.5 L331.5 686.8 L330.5 685.0 L329.4 683.3 L328.5 681.6 L327.5 679.8 L326.6 678.0 L325.7 676.2 L324.9 674.4 L324.0 672.6 L323.2 670.8 L322.4 669.0 L321.6 667.1 L320.9 665.3 L320.1 663.4 L319.4 661.5 L318.7 659.7 L318.0 657.8 L317.4 655.9 L316.7 654.0 L316.1 652.1 L315.5 650.2 L314.9 648.3 L314.4 646.3 L313.9 644.4 L313.4 642.5 L313.0 640.5 L312.5 638.6 L312.2 636.6 L311.8 634.6 L311.5 632.7 L311.1 630.7 L310.8 628.7 L310.6 626.7 L310.3 624.7 L310.1 622.8 L309.9 620.8 L309.7 618.8 L309.5 616.8 L309.4 614.8 L309.2 612.8 L309.1 610.8 L309.0 608.8 L308.9 606.8 L308.8 604.8 L308.7 602.8 L308.7 600.8 L308.6 598.8 L308.6 596.8 L308.6 594.8 L308.6 592.8 L308.7 590.8 L308.7 588.8 L308.8 586.8 L308.8 584.8 L308.9 582.8 L309.0 580.8 L309.1 578.8 L309.3 576.8 L309.4 574.8 L309.6 572.8 L309.8 570.8 L310.1 568.8 L310.3 566.8 L310.6 564.9 L310.9 562.9 L311.2 560.9 L311.6 559.0 L312.0 557.0 L312.5 555.1 L313.0 553.1 L313.5 551.2 L314.1 549.3 L314.7 547.4 L315.3 545.5 L316.0 543.6 L316.6 541.7 L317.3 539.8 L318.1 538.0 L318.8 536.1 L319.6 534.3 L320.4 532.4 L321.2 530.6 L322.0 528.8 L322.8 526.9 L323.7 525.1 L324.5 523.3 L325.4 521.5 L326.3 519.7 L327.2 518.0 L328.2 516.2 L329.1 514.4 L330.1 512.7 L331.1 511.0 L332.1 509.2 L333.1 507.5 L334.2 505.8 L335.2 504.1 L336.3 502.4 L337.4 500.7 L338.5 499.1 L339.6 497.4 L340.8 495.8 L341.9 494.1 L343.1 492.5 L344.3 490.9 L345.5 489.3 L346.7 487.8 L348.0 486.2 L349.3 484.7 L350.6 483.2 L351.9 481.7 L353.3 480.2 L354.7 478.7 L356.1 477.3 L357.5 475.9 L358.9 474.5 L360.3 473.1 L361.8 471.7 L363.3 470.4 L364.8 469.1 L366.3 467.8 L367.8 466.4 L369.3 465.2 L370.9 463.9 L372.4 462.6 L374.0 461.4 L375.6 460.1 L377.2 458.9 L378.8 457.7 L380.4 456.5 L382.0 455.4 L383.6 454.2 L385.3 453.1 L386.9 452.0 L388.6 450.8 L390.3 449.8 L392.0 448.7 L393.7 447.6 L395.4 446.6 L397.1 445.6 L398.8 444.6 L400.6 443.6 L402.3 442.6 L404.1 441.7 L405.9 440.8 L407.7 439.9 L409.5 439.0 L411.3 438.1 L413.1 437.3 L414.9 436.5 L416.8 435.7 L418.6 434.9 L420.5 434.2 L422.3 433.5 L424.2 432.8 L426.1 432.2 L428.0 431.5 L429.9 430.9 L431.8 430.3 L433.7 429.7 L435.6 429.1 L437.5 428.5 L439.4 427.9 L441.3 427.2 L443.2 426.6 L445.1 425.9 L447.0 425.2 L448.9 424.5 L450.8 423.8 L452.6 423.1 L454.5 422.4 L456.4 421.7 L458.2 421.0 L460.1 420.2 L462.0 419.5 L463.8 418.8 L465.7 418.1 L467.6 417.3 L469.4 416.6 L471.3 415.9 L473.2 415.2 L475.0 414.5 L476.9 413.7 L478.8 413.0 L480.7 412.3 L482.5 411.6 L484.4 410.9 L486.3 410.3 L488.2 409.6 L490.1 408.9 L492.0 408.2 L493.8 407.6 L495.7 406.9 L497.6 406.2 L499.5 405.6 L501.4 404.9 L503.3 404.3 L505.2 403.6 L507.1 403.0 L509.0 402.3 L510.9 401.6 L512.8 401.0 L514.7 400.3 L516.5 399.7 L518.4 399.0 L520.3 398.4 L522.2 397.7 L524.1 397.0 L526.0 396.3 L527.9 395.7 L529.8 395.0 L531.6 394.3 L533.5 393.6 L535.4 392.9 L537.3 392.2 L539.2 391.6 L541.0 390.9 L542.9 390.2 L544.8 389.5 L546.7 388.8 L548.6 388.1 L550.5 387.4 L552.3 386.8 L554.2 386.1 L556.1 385.4 L558.0 384.6 L559.8 383.9 L561.7 383.2 L563.6 382.4 L565.4 381.7 L567.3 380.9 L569.1 380.1 L570.9 379.3 L572.7 378.5 L574.6 377.6 L576.3 376.8 L578.1 375.9 L579.9 374.9 L581.6 374.0 L583.4 373.0 L585.1 371.9 L586.8 370.9 L588.5 369.8 L590.1 368.7 L591.8 367.6 L593.4 366.4 L595.0 365.2 L596.6 364.0 L598.2 362.8 L599.8 361.6 L601.4 360.3 L602.9 359.1 L604.5 357.9 L606.1 356.6 L607.7 355.4 L609.2 354.2 L610.8 353.0 L612.4 351.8 L614.1 350.6 L615.7 349.4 L617.3 348.3 L619.0 347.1 L620.6 346.0 L622.3 344.9 L624.0 343.9 L625.7 342.8 L627.4 341.8 L629.1 340.8 L630.9 339.8 L632.6 338.8 L634.4 337.9 L636.2 337.0 L638.0 336.1 L639.8 335.2 L641.6 334.4 L643.5 333.7 L645.3 332.9 L647.2 332.3 L649.1 331.6 L651.0 331.0 L652.9 330.4 L654.8 329.9 L656.7 329.4 L658.7 329.0 L660.6 328.6 L662.6 328.2 L664.6 327.9 L666.6 327.6 L668.5 327.4 L670.5 327.2 L672.5 327.1 L674.5 327.0 L676.5 326.9Z" fill="#676d4a" stroke="#1d1d1d" stroke-width="4.5" stroke-linejoin="round" stroke-linecap="round"/>
<path d="M683.3 342.0 L685.3 342.2 L687.2 342.5 L689.2 342.8 L691.2 343.1 L693.1 343.5 L695.1 344.0 L697.0 344.5 L698.9 345.0 L700.8 345.6 L702.6 346.3 L704.5 347.0 L706.3 347.8 L708.1 348.6 L709.9 349.6 L711.6 350.5 L713.3 351.6 L715.0 352.6 L716.6 353.8 L718.2 355.0 L719.7 356.2 L721.2 357.5 L722.7 358.8 L724.2 360.2 L725.6 361.6 L726.9 363.0 L728.2 364.5 L729.5 366.1 L730.7 367.7 L731.8 369.3 L732.9 370.9 L734.0 372.6 L735.0 374.3 L736.0 376.0 L736.9 377.8 L737.8 379.6 L738.7 381.4 L739.5 383.2 L740.3 385.0 L741.0 386.9 L741.8 388.7 L742.5 390.6 L743.1 392.5 L743.8 394.4 L744.4 396.3 L745.0 398.2 L745.5 400.1 L745.9 402.0 L746.4 404.0 L746.7 405.9 L747.0 407.9 L747.3 409.9 L747.5 411.9 L747.7 413.8 L747.9 415.8 L748.0 417.8 L748.0 419.8 L748.1 421.8 L748.0 423.8 L748.0 425.8 L747.9 427.8 L747.7 429.8 L747.6 431.8 L747.3 433.7 L747.1 435.7 L746.8 437.7 L746.4 439.6 L746.0 441.6 L745.6 443.5 L745.1 445.5 L744.6 447.4 L744.0 449.3 L743.4 451.2 L742.7 453.1 L742.0 454.9 L741.2 456.7 L740.3 458.5 L739.5 460.3 L738.6 462.1 L737.6 463.9 L736.6 465.6 L735.6 467.3 L734.6 469.0 L733.5 470.7 L732.4 472.4 L731.3 474.0 L730.2 475.7 L729.0 477.3 L727.8 478.9 L726.6 480.5 L725.4 482.1 L724.1 483.6 L722.9 485.2 L721.6 486.8 L720.4 488.3 L719.1 489.9 L717.9 491.4 L716.6 493.0 L715.3 494.5 L714.1 496.1 L712.8 497.7 L711.6 499.2 L710.3 500.8 L709.1 502.4 L707.9 503.9 L706.7 505.5 L705.4 507.1 L704.3 508.7 L703.1 510.3 L701.9 512.0 L700.8 513.6 L699.6 515.2 L698.5 516.9 L697.4 518.6 L696.3 520.2 L695.2 521.9 L694.2 523.6 L693.1 525.3 L692.0 527.0 L691.0 528.7 L689.9 530.4 L688.9 532.1 L687.8 533.8 L686.8 535.5 L685.7 537.2 L684.7 538.9 L683.6 540.6 L682.6 542.3 L681.6 544.0 L680.5 545.8 L679.5 547.5 L678.5 549.2 L677.5 550.9 L676.5 552.7 L675.5 554.4 L674.6 556.2 L673.6 557.9 L672.7 559.7 L671.9 561.5 L671.0 563.3 L670.2 565.1 L669.3 567.0 L668.5 568.8 L667.8 570.6 L667.0 572.5 L666.2 574.3 L665.5 576.2 L664.8 578.0 L664.1 579.9 L663.4 581.8 L662.7 583.7 L662.0 585.6 L661.4 587.5 L660.8 589.4 L660.2 591.3 L659.6 593.2 L659.0 595.1 L658.5 597.0 L658.0 598.9 L657.5 600.9 L657.0 602.8 L656.6 604.8 L656.2 606.7 L655.7 608.7 L655.3 610.7 L655.0 612.6 L654.6 614.6 L654.2 616.5 L653.8 618.5 L653.4 620.5 L653.0 622.4 L652.5 624.4 L652.1 626.3 L651.6 628.3 L651.1 630.2 L650.6 632.1 L650.1 634.1 L649.6 636.0 L649.0 637.9 L648.4 639.8 L647.9 641.7 L647.3 643.6 L646.6 645.6 L646.0 647.5 L645.4 649.3 L644.7 651.2 L644.1 653.1 L643.4 655.0 L642.7 656.9 L641.9 658.7 L641.2 660.6 L640.4 662.4 L639.6 664.3 L638.8 666.1 L638.0 667.9 L637.1 669.7 L636.2 671.5 L635.3 673.3 L634.4 675.0 L633.4 676.8 L632.5 678.6 L631.5 680.3 L630.5 682.0 L629.5 683.8 L628.5 685.5 L627.4 687.2 L626.3 688.9 L625.3 690.5 L624.2 692.2 L623.1 693.9 L621.9 695.5 L620.8 697.2 L619.6 698.8 L618.4 700.4 L617.2 702.0 L616.0 703.5 L614.7 705.1 L613.4 706.6 L612.1 708.1 L610.8 709.6 L609.4 711.1 L608.1 712.6 L606.7 714.0 L605.3 715.4 L603.8 716.8 L602.4 718.2 L600.9 719.6 L599.5 720.9 L598.0 722.3 L596.5 723.6 L595.0 724.9 L593.5 726.2 L592.0 727.5 L590.5 728.8 L588.9 730.1 L587.4 731.4 L585.9 732.7 L584.3 734.0 L582.8 735.2 L581.2 736.5 L579.6 737.7 L578.0 738.9 L576.4 740.0 L574.7 741.1 L573.1 742.2 L571.4 743.3 L569.7 744.3 L567.9 745.3 L566.2 746.2 L564.4 747.1 L562.6 748.0 L560.8 748.8 L559.0 749.7 L557.1 750.4 L555.3 751.2 L553.4 751.9 L551.5 752.6 L549.7 753.3 L547.8 754.0 L545.9 754.6 L544.0 755.2 L542.1 755.8 L540.2 756.4 L538.2 757.0 L536.3 757.5 L534.4 758.1 L532.5 758.6 L530.5 759.1 L528.6 759.6 L526.7 760.0 L524.7 760.5 L522.8 760.9 L520.8 761.3 L518.8 761.7 L516.9 762.1 L514.9 762.5 L512.9 762.8 L511.0 763.1 L509.0 763.4 L507.0 763.7 L505.0 763.9 L503.0 764.1 L501.0 764.3 L499.1 764.4 L497.1 764.5 L495.1 764.6 L493.1 764.7 L491.1 764.7 L489.1 764.6 L487.1 764.6 L485.1 764.5 L483.1 764.4 L481.1 764.3 L479.1 764.1 L477.1 763.9 L475.1 763.7 L473.2 763.4 L471.2 763.2 L469.2 762.9 L467.2 762.5 L465.3 762.2 L463.3 761.8 L461.3 761.4 L459.4 761.0 L457.4 760.6 L455.5 760.1 L453.5 759.7 L451.6 759.2 L449.7 758.6 L447.8 758.1 L445.8 757.5 L443.9 756.9 L442.0 756.3 L440.1 755.6 L438.3 754.9 L436.4 754.2 L434.5 753.5 L432.7 752.8 L430.8 752.0 L429.0 751.2 L427.2 750.4 L425.4 749.6 L423.5 748.7 L421.7 747.8 L420.0 746.9 L418.2 746.0 L416.4 745.1 L414.7 744.1 L412.9 743.1 L411.2 742.1 L409.5 741.1 L407.8 740.1 L406.1 739.0 L404.4 737.9 L402.8 736.8 L401.1 735.7 L399.4 734.6 L397.8 733.4 L396.2 732.2 L394.6 731.1 L393.0 729.9 L391.4 728.7 L389.8 727.4 L388.2 726.2 L386.7 725.0 L385.1 723.7 L383.6 722.4 L382.0 721.1 L380.5 719.9 L379.0 718.5 L377.5 717.2 L376.0 715.9 L374.5 714.5 L373.0 713.2 L371.6 711.8 L370.1 710.4 L368.7 709.0 L367.3 707.6 L365.9 706.2 L364.5 704.8 L363.1 703.3 L361.8 701.8 L360.5 700.4 L359.1 698.8 L357.8 697.3 L356.6 695.8 L355.3 694.2 L354.1 692.7 L352.9 691.1 L351.7 689.5 L350.5 687.9 L349.3 686.2 L348.2 684.6 L347.1 682.9 L345.9 681.3 L344.8 679.6 L343.8 677.9 L342.7 676.2 L341.6 674.5 L340.6 672.8 L339.6 671.1 L338.6 669.4 L337.6 667.6 L336.6 665.9 L335.7 664.1 L334.7 662.4 L333.8 660.6 L332.9 658.8 L332.1 657.0 L331.3 655.2 L330.5 653.3 L329.8 651.5 L329.1 649.6 L328.5 647.7 L327.9 645.8 L327.4 643.9 L326.9 642.0 L326.4 640.0 L326.0 638.1 L325.6 636.1 L325.3 634.2 L324.9 632.2 L324.6 630.2 L324.3 628.2 L324.1 626.3 L323.8 624.3 L323.6 622.3 L323.4 620.3 L323.2 618.3 L323.0 616.3 L322.8 614.3 L322.7 612.3 L322.6 610.3 L322.5 608.3 L322.4 606.3 L322.3 604.3 L322.3 602.3 L322.2 600.3 L322.2 598.3 L322.3 596.3 L322.3 594.3 L322.3 592.3 L322.4 590.3 L322.5 588.4 L322.6 586.4 L322.7 584.4 L322.8 582.4 L323.0 580.4 L323.2 578.4 L323.4 576.4 L323.6 574.4 L323.8 572.4 L324.1 570.4 L324.4 568.5 L324.7 566.5 L325.0 564.5 L325.4 562.5 L325.7 560.6 L326.2 558.6 L326.6 556.7 L327.1 554.7 L327.6 552.8 L328.1 550.9 L328.7 549.0 L329.3 547.1 L329.9 545.2 L330.6 543.3 L331.3 541.4 L332.0 539.6 L332.7 537.7 L333.5 535.9 L334.3 534.0 L335.1 532.2 L335.9 530.4 L336.8 528.6 L337.7 526.8 L338.6 525.0 L339.5 523.2 L340.4 521.5 L341.4 519.7 L342.4 518.0 L343.3 516.2 L344.3 514.5 L345.3 512.7 L346.2 510.9 L347.2 509.2 L348.1 507.4 L349.1 505.7 L350.1 503.9 L351.0 502.2 L352.1 500.5 L353.1 498.8 L354.2 497.1 L355.3 495.4 L356.4 493.8 L357.6 492.2 L358.8 490.6 L360.1 489.1 L361.4 487.6 L362.7 486.1 L364.1 484.7 L365.5 483.2 L366.9 481.8 L368.4 480.5 L369.8 479.1 L371.3 477.8 L372.8 476.4 L374.3 475.1 L375.8 473.8 L377.3 472.5 L378.8 471.2 L380.4 469.9 L381.9 468.7 L383.5 467.4 L385.1 466.2 L386.7 465.0 L388.3 463.8 L389.9 462.6 L391.5 461.4 L393.1 460.3 L394.8 459.2 L396.5 458.1 L398.1 457.0 L399.8 455.9 L401.5 454.9 L403.2 453.8 L405.0 452.8 L406.7 451.9 L408.5 450.9 L410.2 450.0 L412.0 449.0 L413.8 448.2 L415.6 447.3 L417.4 446.4 L419.2 445.6 L421.1 444.8 L422.9 444.1 L424.8 443.3 L426.6 442.6 L428.5 441.9 L430.4 441.3 L432.3 440.6 L434.2 440.0 L436.1 439.3 L438.0 438.7 L439.9 438.1 L441.8 437.5 L443.7 436.8 L445.6 436.2 L447.5 435.6 L449.4 434.9 L451.3 434.3 L453.1 433.6 L455.0 433.0 L456.9 432.3 L458.8 431.7 L460.7 431.0 L462.6 430.4 L464.5 429.8 L466.4 429.1 L468.3 428.5 L470.2 427.8 L472.1 427.2 L474.0 426.6 L475.9 425.9 L477.8 425.3 L479.7 424.7 L481.6 424.0 L483.5 423.4 L485.4 422.8 L487.3 422.2 L489.2 421.5 L491.1 420.9 L493.0 420.3 L494.9 419.7 L496.8 419.1 L498.7 418.5 L500.6 417.9 L502.5 417.2 L504.4 416.6 L506.3 416.0 L508.2 415.4 L510.1 414.8 L512.0 414.1 L513.9 413.5 L515.8 412.9 L517.7 412.2 L519.6 411.6 L521.5 411.0 L523.4 410.3 L525.3 409.7 L527.2 409.0 L529.1 408.4 L531.0 407.7 L532.9 407.0 L534.8 406.4 L536.6 405.7 L538.5 405.1 L540.4 404.4 L542.3 403.8 L544.2 403.1 L546.1 402.5 L548.0 401.8 L549.9 401.1 L551.8 400.5 L553.6 399.8 L555.5 399.1 L557.4 398.4 L559.3 397.7 L561.1 397.0 L563.0 396.3 L564.8 395.5 L566.7 394.7 L568.5 393.9 L570.3 393.1 L572.2 392.3 L574.0 391.4 L575.7 390.5 L577.5 389.6 L579.3 388.6 L581.0 387.6 L582.7 386.6 L584.4 385.5 L586.1 384.5 L587.7 383.3 L589.3 382.2 L591.0 381.0 L592.6 379.8 L594.1 378.6 L595.7 377.4 L597.3 376.1 L598.8 374.9 L600.4 373.6 L601.9 372.3 L603.4 371.0 L605.0 369.7 L606.5 368.4 L608.0 367.1 L609.5 365.8 L611.1 364.6 L612.6 363.3 L614.2 362.0 L615.7 360.8 L617.3 359.6 L618.9 358.4 L620.6 357.2 L622.2 356.1 L623.9 355.0 L625.6 354.0 L627.3 353.0 L629.0 352.0 L630.8 351.1 L632.6 350.2 L634.4 349.4 L636.2 348.7 L638.1 348.0 L640.0 347.3 L641.9 346.7 L643.8 346.2 L645.7 345.6 L647.6 345.2 L649.6 344.7 L651.5 344.3 L653.5 343.9 L655.5 343.5 L657.4 343.2 L659.4 342.9 L661.4 342.6 L663.4 342.4 L665.4 342.2 L667.3 342.0 L669.3 341.8 L671.3 341.7 L673.3 341.7 L675.3 341.7 L677.3 341.7 L679.3 341.8 L681.3 341.9Z" fill="#b2c47d" stroke="#1d1d1d" stroke-width="4.5" stroke-linejoin="round" stroke-linecap="round"/>
<path d="M503.0 510.4 L505.0 510.5 L507.0 510.7 L509.0 510.9 L510.9 511.2 L512.9 511.5 L514.9 511.9 L516.8 512.3 L518.8 512.8 L520.7 513.3 L522.6 513.9 L524.5 514.5 L526.4 515.2 L528.3 515.8 L530.1 516.6 L532.0 517.3 L533.8 518.1 L535.7 518.9 L537.5 519.7 L539.3 520.6 L541.1 521.4 L542.9 522.3 L544.7 523.2 L546.4 524.2 L548.1 525.2 L549.8 526.3 L551.5 527.4 L553.0 528.6 L554.5 529.9 L555.8 531.4 L557.0 532.9 L557.9 534.6 L558.8 536.4 L559.5 538.3 L560.1 540.2 L560.6 542.1 L561.1 544.0 L561.5 546.0 L562.0 547.9 L562.3 549.9 L562.7 551.9 L563.0 553.8 L563.3 555.8 L563.6 557.8 L563.8 559.8 L564.1 561.8 L564.4 563.7 L564.7 565.7 L564.9 567.7 L565.2 569.7 L565.5 571.7 L565.8 573.6 L566.1 575.6 L566.3 577.6 L566.6 579.6 L566.7 581.6 L566.9 583.6 L567.0 585.6 L567.0 587.6 L567.0 589.6 L566.9 591.6 L566.8 593.5 L566.6 595.5 L566.4 597.5 L566.2 599.5 L565.9 601.5 L565.5 603.4 L565.0 605.4 L564.5 607.3 L563.9 609.2 L563.2 611.1 L562.5 612.9 L561.7 614.8 L560.8 616.6 L559.9 618.3 L558.9 620.1 L557.9 621.8 L556.9 623.5 L555.8 625.2 L554.7 626.8 L553.5 628.4 L552.3 630.0 L551.0 631.6 L549.7 633.1 L548.3 634.5 L546.9 635.9 L545.4 637.3 L543.9 638.6 L542.3 639.8 L540.7 641.0 L539.1 642.1 L537.4 643.2 L535.7 644.2 L534.0 645.2 L532.2 646.2 L530.4 647.1 L528.6 648.0 L526.8 648.8 L525.0 649.6 L523.1 650.4 L521.3 651.1 L519.4 651.8 L517.5 652.4 L515.6 653.0 L513.7 653.5 L511.7 654.0 L509.8 654.4 L507.8 654.7 L505.8 655.1 L503.8 655.3 L501.9 655.5 L499.9 655.7 L497.9 655.7 L495.9 655.8 L493.9 655.8 L491.9 655.7 L489.9 655.5 L487.9 655.3 L485.9 655.1 L484.0 654.7 L482.0 654.3 L480.1 653.9 L478.1 653.4 L476.2 652.8 L474.3 652.2 L472.4 651.6 L470.5 650.9 L468.7 650.2 L466.8 649.5 L465.0 648.7 L463.1 647.9 L461.3 647.1 L459.5 646.2 L457.8 645.2 L456.0 644.2 L454.3 643.2 L452.7 642.1 L451.1 640.9 L449.5 639.7 L448.0 638.4 L446.5 637.0 L445.1 635.6 L443.7 634.2 L442.3 632.7 L441.0 631.2 L439.7 629.7 L438.5 628.1 L437.2 626.6 L436.0 625.0 L434.8 623.4 L433.7 621.7 L432.5 620.1 L431.4 618.5 L430.3 616.8 L429.3 615.1 L428.2 613.4 L427.2 611.6 L426.3 609.9 L425.4 608.1 L424.6 606.3 L423.8 604.4 L423.2 602.5 L422.5 600.7 L422.0 598.7 L421.5 596.8 L421.0 594.9 L420.7 592.9 L420.4 590.9 L420.2 588.9 L420.1 587.0 L420.1 585.0 L420.2 583.0 L420.4 581.0 L420.6 579.0 L420.8 577.0 L421.0 575.0 L421.3 573.1 L421.6 571.1 L422.0 569.1 L422.4 567.2 L422.9 565.2 L423.4 563.3 L424.0 561.4 L424.6 559.5 L425.2 557.6 L425.9 555.7 L426.7 553.9 L427.5 552.0 L428.4 550.2 L429.3 548.5 L430.2 546.7 L431.2 545.0 L432.3 543.3 L433.4 541.6 L434.6 540.0 L435.8 538.4 L437.0 536.9 L438.3 535.3 L439.6 533.8 L441.0 532.4 L442.4 531.0 L443.9 529.6 L445.4 528.3 L447.0 527.1 L448.5 525.8 L450.2 524.7 L451.8 523.5 L453.5 522.4 L455.2 521.4 L456.9 520.4 L458.6 519.4 L460.4 518.4 L462.2 517.5 L464.0 516.6 L465.8 515.8 L467.6 515.0 L469.5 514.3 L471.4 513.6 L473.3 513.1 L475.2 512.6 L477.1 512.1 L479.1 511.7 L481.1 511.4 L483.0 511.1 L485.0 510.9 L487.0 510.7 L489.0 510.5 L491.0 510.4 L493.0 510.3 L495.0 510.3 L497.0 510.2 L499.0 510.2 L501.0 510.3Z" fill="#a38977" stroke="#1d1d1d" stroke-width="4.5" stroke-linejoin="round" stroke-linecap="round"/>
<path d="M528.4 528.2 L527.7 527.2 L526.5 526.4 L525.2 525.7 L523.8 525.2 L522.4 524.7 L520.9 524.2 L519.5 523.9 L518.0 523.6 L516.5 523.4 L515.0 523.2 L513.5 523.2 L512.0 523.1 L510.5 523.2 L509.0 523.2 L507.5 523.3 L506.0 523.4 L504.5 523.4 L503.0 523.5 L501.5 523.5 L500.0 523.6 L498.5 523.6 L497.0 523.7 L495.5 523.7 L494.0 523.8 L492.5 523.9 L491.0 524.0 L489.5 524.2 L488.0 524.4 L486.6 524.7 L485.1 525.0 L483.6 525.3 L482.2 525.7 L480.7 526.1 L479.3 526.5 L477.9 527.0 L476.4 527.5 L475.0 528.0 L473.6 528.6 L472.2 529.1 L470.9 529.7 L469.5 530.3 L468.1 530.9 L466.8 531.6 L465.4 532.2 L464.1 532.9 L462.8 533.7 L461.5 534.4 L460.2 535.1 L458.9 535.9 L457.6 536.7 L456.3 537.5 L455.1 538.4 L453.9 539.2 L452.6 540.1 L451.5 541.0 L450.3 542.0 L449.2 543.0 L448.1 544.0 L447.1 545.1 L446.1 546.3 L445.2 547.5 L444.4 548.7 L443.7 550.0 L443.0 551.4 L442.4 552.7 L441.8 554.1 L441.3 555.5 L440.8 557.0 L440.4 558.4 L440.1 559.9 L439.8 561.3 L439.5 562.8 L439.2 564.3 L439.0 565.8 L438.8 567.3 L438.7 568.8 L438.5 570.2 L438.3 571.7 L438.2 573.2 L438.1 574.7 L438.0 576.2 L437.9 577.7 L437.8 579.2 L437.7 580.7 L437.6 582.2 L437.5 583.7 L437.5 585.2 L437.5 586.7 L437.4 588.2 L437.4 589.7 L437.5 591.2 L437.5 592.7 L437.6 594.2 L437.7 595.7 L437.9 597.2 L438.1 598.7 L438.4 600.2 L438.7 601.7 L439.0 603.1 L439.4 604.6 L439.9 606.0 L440.4 607.4 L441.0 608.8 L441.6 610.1 L442.3 611.5 L443.1 612.7 L444.0 613.9 L445.0 615.1 L446.0 616.2 L447.1 617.2 L448.3 618.1 L449.5 619.0 L450.8 619.7 L452.2 620.1 L453.6 620.3 L455.1 620.2 L456.4 619.7 L457.6 618.9 L458.7 617.9 L459.7 616.8 L460.5 615.6 L461.3 614.3 L461.9 612.9 L462.4 611.5 L462.8 610.1 L463.2 608.6 L463.6 607.2 L464.0 605.7 L464.3 604.2 L464.7 602.8 L465.0 601.3 L465.4 599.8 L465.7 598.4 L466.0 596.9 L466.2 595.4 L466.4 593.9 L466.6 592.4 L466.8 591.0 L466.9 589.5 L466.9 588.0 L467.0 586.5 L467.0 585.0 L467.2 583.5 L467.3 582.0 L467.5 580.5 L467.8 579.0 L468.0 577.5 L468.3 576.1 L468.7 574.6 L469.0 573.1 L469.4 571.7 L469.9 570.2 L470.4 568.8 L470.9 567.4 L471.5 566.0 L472.1 564.7 L472.8 563.3 L473.5 562.0 L474.2 560.7 L475.0 559.4 L475.8 558.2 L476.7 557.0 L477.7 555.8 L478.7 554.7 L479.7 553.6 L480.8 552.6 L481.9 551.6 L483.1 550.6 L484.3 549.7 L485.5 548.8 L486.7 548.0 L488.0 547.2 L489.3 546.4 L490.6 545.6 L491.9 544.9 L493.2 544.2 L494.6 543.6 L496.0 543.0 L497.4 542.4 L498.8 541.9 L500.2 541.4 L501.6 540.8 L503.0 540.3 L504.4 539.8 L505.8 539.3 L507.2 538.7 L508.6 538.2 L510.0 537.7 L511.4 537.2 L512.9 536.7 L514.3 536.2 L515.7 535.7 L517.1 535.2 L518.5 534.7 L519.9 534.1 L521.3 533.6 L522.7 533.0 L524.1 532.4 L525.4 531.8 L526.7 531.1 L527.8 530.2 L528.5 529.2Z" fill="#776660" stroke="#1d1d1d" stroke-width="4.5" stroke-linejoin="round" stroke-linecap="round"/>
<path d="M603.3 402.3 C608.9 398.2 626.7 383.1 637.2 378.0 C647.7 372.9 661.4 373.0 666.3 372.0" fill="none" stroke="#1d1d1d" stroke-width="4.2" stroke-linejoin="round" stroke-linecap="round"/>
<path d="M599.7 425.3 C602.7 422.5 614.8 411.1 617.8 408.3" fill="none" stroke="#1d1d1d" stroke-width="4.2" stroke-linejoin="round" stroke-linecap="round"/>
<path d="M405.4 561.3 C406.3 565.4 409.8 581.6 410.7 585.7" fill="none" stroke="#1d1d1d" stroke-width="4.2" stroke-linejoin="round" stroke-linecap="round"/>
<path d="M394.9 588.3 C396.1 590.8 401.1 600.8 402.3 603.3" fill="none" stroke="#1d1d1d" stroke-width="4.2" stroke-linejoin="round" stroke-linecap="round"/>
<path d="M360.3 678.7 C364.9 683.9 376.3 700.4 387.7 710.0 C399.1 719.6 415.9 729.5 428.7 736.1 C441.5 742.7 453.1 747.1 464.3 749.8 C475.5 752.4 490.5 751.6 495.7 752.0" fill="none" stroke="#1d1d1d" stroke-width="4.2" stroke-linejoin="round" stroke-linecap="round"/></svg></div>
<svg class="abs" style="left:0;top:0" width="60" height="860" viewBox="0 0 60 860">
<defs><linearGradient id="gr" x1="0" y1="0" x2="1" y2="1"><stop offset="0.45" stop-color="#272b30"/><stop offset="1" stop-color="#c8c8c8"/></linearGradient></defs>
<g fill="#bdbdbd" stroke="none">
<!-- arrow -->
<path d="M9.7 86.8 L25.2 93.2 L19.2 96.2 L16.6 102.2 Z" stroke="#bdbdbd" stroke-width="1" stroke-linejoin="round"/>
<!-- marquee -->
<rect x="9.6" y="118.4" width="14.8" height="14.8" rx="2" fill="none" stroke="#bdbdbd" stroke-width="2" stroke-dasharray="3.2 2.4"/>
<!-- lasso -->
<ellipse cx="17" cy="155.3" rx="7.9" ry="6" fill="none" stroke="#bdbdbd" stroke-width="2"/>
<circle cx="17.2" cy="160.2" r="2" fill="none" stroke="#bdbdbd" stroke-width="1.8"/>
<path d="M18.2 161.8 L18.4 166" stroke="#bdbdbd" stroke-width="1.8" fill="none"/>
<!-- wand -->
<path d="M11.6 194 L20 185.6" stroke="#bdbdbd" stroke-width="5" stroke-linecap="round" fill="none"/>
<path d="M18.6 186.8 L20 185.4" stroke="#272b30" stroke-width="1.4" stroke-linecap="round" fill="none"/>
<circle cx="13.8" cy="181.4" r="1.4"/><circle cx="24.4" cy="180.6" r="1.9"/><circle cx="24.4" cy="189" r="1.9"/><circle cx="20.4" cy="193.4" r="1.3"/>
<!-- crop -->
<path d="M11.6 210.8 V224.6 H26" fill="none" stroke="#bdbdbd" stroke-width="2"/>
<path d="M7.8 214.6 H22.4 V228.6" fill="none" stroke="#bdbdbd" stroke-width="2"/>
<!-- scissors -->
<path d="M10.6 242 L19.2 253 M23.4 242 L14.8 253" stroke="#bdbdbd" stroke-width="2.2" stroke-linecap="round" fill="none"/>
<circle cx="12.2" cy="255.6" r="2.9" fill="none" stroke="#bdbdbd" stroke-width="2"/>
<circle cx="21.8" cy="255.6" r="2.9" fill="none" stroke="#bdbdbd" stroke-width="2"/>
<!-- waves -->
<g fill="none" stroke="#bdbdbd" stroke-width="1.9" stroke-linecap="round">
<path d="M8.5 277.5 q2.25 -2.6 4.5 0 t4.5 0 t4.5 0 t4.2 -0.4"/>
<path d="M8.5 282.5 q2.25 -2.6 4.5 0 t4.5 0 t4.5 0 t4.2 -0.4"/>
<path d="M8.5 287.8 q2.25 -2.6 4.5 0 t4.5 0 t4.5 0 t4.2 -0.4"/>
</g>
<!-- bandage -->
<rect x="7" y="310.6" width="20" height="7" rx="3.5" transform="rotate(-40 17 314.1)"/>
<g fill="#272b30"><circle cx="15.2" cy="313.2" r="0.7"/><circle cx="17" cy="311.8" r="0.7"/><circle cx="18.4" cy="313.6" r="0.7"/><circle cx="16.6" cy="315.2" r="0.7"/><circle cx="14.2" cy="315.6" r="0.7"/><circle cx="19.6" cy="311.6" r="0.7"/></g>
<!-- stamp -->
<circle cx="16.8" cy="338.2" r="3.6"/><rect x="15.4" y="340" width="2.8" height="6"/><rect x="8.6" y="345.8" width="16.6" height="5.4" rx="1"/><rect x="10.2" y="352.2" width="13.8" height="1.5"/>
<!-- drop -->
<path d="M17 366.4 C17 366.4 10.6 373.6 10.6 378.4 A6.4 6.4 0 0 0 23.4 378.4 C23.4 373.6 17 366.4 17 366.4Z"/>
<!-- dodge -->
<circle cx="17" cy="406.6" r="7.2" fill="none" stroke="#bdbdbd" stroke-width="2"/>
<path d="M22.1 401.5 A7.2 7.2 0 0 1 11.9 411.7 Z"/>
<!-- sponge gear -->
<polygon points="26.80,437.60 24.73,439.67 25.49,442.50 22.66,443.26 21.90,446.09 19.07,445.33 17.00,447.40 14.93,445.33 12.10,446.09 11.34,443.26 8.51,442.50 9.27,439.67 7.20,437.60 9.27,435.53 8.51,432.70 11.34,431.94 12.10,429.11 14.93,429.87 17.00,427.80 19.07,429.87 21.90,429.11 22.66,431.94 25.49,432.70 24.73,435.53"/>
<circle cx="17" cy="437.6" r="6.6" fill="#272b30"/><circle cx="17" cy="437.6" r="5.2"/>
<!-- pen -->
<path d="M8.6 478.4 L10.2 472.6 L20.6 462.2 Q22 460.8 23.4 462.2 L24.8 463.6 Q26.2 465 24.8 466.4 L14.4 476.8 Z"/>
<path d="M18.6 464.6 L22.4 468.4" stroke="#272b30" stroke-width="1" fill="none"/>
<path d="M24.2 468.4 L18.6 474" stroke="#bdbdbd" stroke-width="1.2" fill="none"/>
<!-- brush -->
<path d="M17 497.6 L23.4 490.6 Q25.6 488.6 26.6 489.6 Q27.4 490.8 25.6 492.8 L19.6 500.2 Z"/>
<rect x="14.2" y="498.6" width="4.6" height="3.4" transform="rotate(-45 16.5 500.3)"/>
<path d="M14.4 501.2 Q9.6 502.4 8.8 506.4 L7.6 510.8 L12 509.6 Q16 508.6 16.8 503.8 Z"/>
<!-- eraser -->
<path d="M9 536.2 L19.4 525.6 Q21 524 22.6 525.6 L25 528 Q26.6 529.6 25 531.2 L16.4 539.8 L12.4 539.8 L9 536.4 Q8.2 535.6 9 536.2Z"/>
<path d="M10.8 536.2 L14.6 532.4 L19 536.8 L17 538.4 L12.8 538.4 Z" fill="#272b30"/>
<rect x="9" y="538.8" width="8" height="1.4"/>
<!-- brush with arrow -->
<path d="M17 560.6 L23.4 553.6 Q25.6 551.6 26.6 552.6 Q27.4 553.8 25.6 555.8 L19.6 563.2 Z"/>
<rect x="14.2" y="561.6" width="4.6" height="3.4" transform="rotate(-45 16.5 563.3)"/>
<path d="M14.4 564.2 Q9.6 565.4 8.8 569.4 L7.6 573.8 L12 572.6 Q16 571.6 16.8 566.8 Z"/>
<path d="M9.2 561.2 Q9.6 555.8 14.6 554.6" fill="none" stroke="#bdbdbd" stroke-width="1.4"/>
<rect x="13.6" y="553.4" width="2.8" height="2.8" transform="rotate(45 15 554.8)"/>
<rect x="7.8" y="560" width="2.8" height="2.8" transform="rotate(45 9.2 561.4)"/>
<!-- bucket -->
<path d="M15.6 585.6 L24 594 L16.6 601.4 L8.2 593 Z" fill="none" stroke="#bdbdbd" stroke-width="2" stroke-linejoin="round"/>
<path d="M9.6 593 L22.6 593 L16.6 599.8 Z"/>
<path d="M15.2 585.4 L12.6 582.6" stroke="#bdbdbd" stroke-width="1.6"/>
<circle cx="24.8" cy="600.2" r="1.8"/>
<!-- gradient -->
<rect x="9.6" y="617.6" width="14.6" height="14.6" fill="url(#gr)" stroke="#bdbdbd" stroke-width="2"/>
<!-- shapes -->
<circle cx="19.6" cy="654.4" r="5.9" fill="none" stroke="#bdbdbd" stroke-width="1.8"/>
<rect x="7" y="652.4" width="15" height="14" rx="2.2"/>
<!-- active T -->
<rect x="3" y="673" width="28.4" height="29" rx="3.2" fill="#58595c"/>
<path d="M8.5 679 H24.8 V684.6 H22.1 V682.4 H18.5 V693.2 H20.4 V696.3 H11.6 V693.2 H15.2 V682.4 H11.2 V684.6 H8.5 Z" fill="#ffffff"/>
<rect x="22.1" y="693.2" width="2.7" height="3.1" fill="#ffffff"/>
<!-- eyedropper -->
<circle cx="21.8" cy="713.2" r="3.6"/>
<path d="M16 716.4 L18.6 713.8 L22.6 717.8 L20 720.4 Z"/>
<path d="M18.4 718.4 L9.8 727 L8.6 728.4 L10 727.2" fill="none" stroke="#bdbdbd" stroke-width="1"/>
<path d="M18 717.8 L9.6 726.2 L9 728 L10.8 727.4 L19.2 719" fill="none" stroke="#bdbdbd" stroke-width="1.4" stroke-linejoin="round"/>
<!-- zoom -->
<circle cx="18.6" cy="746.8" r="5.6" fill="none" stroke="#bdbdbd" stroke-width="2.6"/>
<path d="M14.6 751 L9.2 756.4" stroke="#bdbdbd" stroke-width="3" stroke-linecap="round"/>
<!-- hand -->
<path d="M11.6 788.6 L7.4 782.6 Q6.8 781.4 8 781.2 Q9.2 781 10.4 782.4 L12.4 784.6 L12 774 Q12 772.6 13 772.6 Q14 772.6 14.2 774 L15 780.4 L15.6 771.8 Q15.8 770.4 16.8 770.4 Q17.8 770.4 17.8 771.8 L18 780.2 L19.4 772.8 Q19.6 771.6 20.6 771.8 Q21.6 772 21.4 773.4 L20.8 781.6 L22.8 775.4 Q23.2 774.2 24.2 774.6 Q25 775 24.6 776.4 L22.6 786 Q21.6 790.4 17.6 790.8 L14.6 790.8 Q12.8 790.6 11.6 788.6Z"/>
</g>
<!-- swap semicircle -->
<path d="M36 812 A9.5 15 0 0 1 36 842 Z" fill="#2a2e33"/>
<rect x="0" y="812" width="37" height="30" fill="none"/>
<!-- color swatches -->
<circle cx="17" cy="836.6" r="11.8" fill="#000" stroke="#fff" stroke-width="2"/>
<circle cx="17" cy="816.6" r="13.4" fill="#272b30"/>
<circle cx="17" cy="816.6" r="12.6" fill="#fff"/>
<!-- swap arrows -->
<path d="M35.4 820 Q38.6 821.6 38.4 826.6 Q38.2 831 35.4 832.6" fill="none" stroke="#a8a8a8" stroke-width="1.8"/>
<path d="M33.6 818.4 L37.6 818.4 L35.4 822 Z M33.4 834.4 L37.4 834.4 L35.6 830.6 Z" fill="#a8a8a8"/>
</svg>

<div id="card" class="abs">
<svg class="abs" style="left:0;top:0" width="214" height="107" viewBox="0 0 214 107">
<defs><filter id="bl" x="-20%" y="-20%" width="140%" height="140%"><feGaussianBlur stdDeviation="1.3"/></filter><filter id="bl2" x="-20%" y="-20%" width="140%" height="140%"><feGaussianBlur stdDeviation="2.2"/></filter></defs>
<rect width="214" height="107" fill="#4a2a5a"/>
<g filter="url(#bl2)">
<ellipse cx="70" cy="75" rx="30" ry="22" fill="#5a3a68"/>
<ellipse cx="165" cy="95" rx="35" ry="12" fill="#56366a"/>
</g>
<g filter="url(#bl)">
<polygon points="0,0 172,0 164,28 152,46 128,36 104,30 80,33 58,36 44,38 26,31 12,34 0,30" fill="#eb9d4a"/>
<polygon points="172,0 214,0 214,72 198,66 180,62 168,48 166,22" fill="#eb9d4a"/>
<polygon points="149.6,53.5 140.4,56.6 148.6,65.4 136.4,63.4 140.4,74.2 131.2,69.7 129.1,76.6 123.4,72.9 118.7,77.6 114.9,71.8 108.6,74.9 108.6,66.5 98.4,69.9 100.2,62.4 95.0,59.2 100.6,53.2 90.2,48.3 97.6,44.2 93.9,36.9 104.3,37.6 99.5,25.4 111.6,33.8 111.2,19.9 118.7,30.2 123.4,23.7 126.6,31.8 134.2,25.6 135.8,32.5 142.2,33.2 140.7,40.2 150.6,41.7 142.2,48.7" fill="#eb9d4a"/>
<polygon points="57.3,39.6 47.1,38.2 48.6,45.4 43.2,41.0 39.0,50.9 38.1,40.7 30.7,43.5 34.2,36.8 26.3,34.0 35.1,31.5 28.3,22.5 37.7,26.5 39.5,19.9 43.4,25.9 50.1,20.0 49.0,28.1 58.4,28.0 49.3,34.0" fill="#eb9d4a"/>
<polygon points="209.2,49.6 196.1,50.3 201.1,59.0 193.1,57.7 191.5,64.3 185.4,59.8 181.1,65.3 177.6,59.7 169.2,65.5 171.2,55.2 160.2,56.9 168.3,48.1 157.9,44.8 167.0,40.6 161.0,33.3 170.8,33.9 167.6,23.1 176.2,27.7 179.4,20.4 184.5,27.4 190.0,23.7 192.1,29.9 201.1,26.9 198.6,35.2 207.9,37.0 198.2,43.5" fill="#eb9d4a"/>
<polygon points="229.4,48.0 223.1,52.0 224.9,57.7 218.5,58.5 218.1,65.5 211.5,61.2 208.0,67.7 203.9,63.4 198.0,65.4 198.0,58.0 189.4,58.7 192.2,52.2 188.2,48.0 193.7,44.2 188.7,36.9 196.4,36.4 196.2,27.5 203.8,32.2 208.0,27.2 211.8,33.8 218.6,29.6 219.6,36.4 229.1,35.8 221.3,44.4" fill="#eb9d4a"/>
<polygon points="38.7,69.5 30.1,72.7 35.7,80.5 27.7,81.5 31.2,92.5 19.8,86.3 18.0,93.4 12.0,90.8 7.7,99.6 2.7,92.3 -6.1,103.9 -6.9,90.2 -15.8,93.5 -14.3,83.7 -25.6,85.1 -15.2,73.8 -32.9,73.4 -22.7,66.0 -33.2,59.4 -21.5,55.9 -24.3,48.6 -14.1,48.9 -14.7,41.4 -8.4,41.2 -5.2,36.0 1.6,42.0 5.4,32.2 9.9,41.0 17.1,32.4 17.5,44.4 25.3,40.9 24.5,48.8 33.4,48.2 30.5,55.3 36.7,58.6 36.5,64.0" fill="#eb9d4a"/>
<polygon points="37.2,65.0 24.6,69.1 32.2,77.4 21.7,77.1 24.7,87.8 14.5,81.7 13.6,96.3 6.5,87.0 -0.1,94.0 -2.1,83.0 -10.7,86.5 -7.9,76.5 -19.7,77.6 -12.1,69.2 -25.5,65.0 -11.7,60.9 -18.0,53.2 -10.5,51.4 -12.3,41.4 -1.6,48.3 -0.2,35.5 6.5,46.9 13.2,35.6 16.0,45.3 26.6,39.8 22.8,52.0 32.2,52.6 25.5,60.7" fill="#f4b363"/>
<polygon points="35.6,103.5 29.9,109.7 38.6,118.4 26.4,119.5 28.0,129.4 16.8,122.5 15.9,141.2 8.1,129.4 -1.7,140.2 -1.6,124.5 -15.9,129.7 -7.9,116.3 -16.3,112.6 -8.1,106.4 -16.6,98.3 -2.0,99.6 -5.6,89.4 3.1,93.1 5.3,81.3 11.7,88.7 22.1,74.7 20.1,93.6 37.0,85.3 29.5,98.9" fill="#f4b363"/>
<polygon points="148.3,108.3 127.9,114.7 136.8,124.0 123.4,121.7 126.4,134.7 116.5,125.7 111.8,143.5 107.1,129.6 93.5,140.0 100.6,121.9 83.6,124.1 95.2,113.9 88.4,107.5 97.8,104.3 87.5,88.1 104.0,96.7 104.9,80.0 113.6,96.2 121.3,87.2 123.2,97.4 134.8,94.5 129.6,105.2" fill="#f4b363"/>
<circle cx="12.0" cy="16.0" r="10.2" fill="#a35f2e"/>
<circle cx="12.0" cy="16.0" r="7.0" fill="#5b1e45"/>
<circle cx="31.0" cy="15.0" r="5.1" fill="#a35f2e"/>
<circle cx="31.0" cy="15.0" r="3.5" fill="#5b1e45"/>
<circle cx="50.0" cy="23.0" r="7.2" fill="#a35f2e"/>
<circle cx="50.0" cy="23.0" r="5.0" fill="#5b1e45"/>
<circle cx="37.5" cy="29.5" r="6.5" fill="#a35f2e"/>
<circle cx="37.5" cy="29.5" r="4.5" fill="#5b1e45"/>
<circle cx="72.0" cy="15.5" r="11.6" fill="#a35f2e"/>
<circle cx="72.0" cy="15.5" r="8.0" fill="#5b1e45"/>
<circle cx="128.8" cy="6.5" r="6.5" fill="#a35f2e"/>
<circle cx="128.8" cy="6.5" r="4.5" fill="#5b1e45"/>
<circle cx="153.9" cy="9.8" r="6.5" fill="#a35f2e"/>
<circle cx="153.9" cy="9.8" r="4.5" fill="#5b1e45"/>
<circle cx="197.5" cy="4.4" r="7.2" fill="#a35f2e"/>
<circle cx="197.5" cy="4.4" r="5.0" fill="#5b1e45"/>
<circle cx="181.2" cy="20.7" r="5.8" fill="#a35f2e"/>
<circle cx="181.2" cy="20.7" r="4.0" fill="#5b1e45"/>
<circle cx="208.4" cy="20.7" r="7.2" fill="#a35f2e"/>
<circle cx="208.4" cy="20.7" r="5.0" fill="#5b1e45"/>
<polygon points="163,-2 178,-2 171,30 168,50 176,64 148,62 152,40 160,15" fill="#4e2d5e"/>
<circle cx="121.2" cy="51.3" r="13.8" fill="#a35f2e"/>
<circle cx="121.2" cy="51.3" r="9.5" fill="#5b1e45"/>
<circle cx="182.2" cy="43.6" r="10.2" fill="#a35f2e"/>
<circle cx="182.2" cy="43.6" r="7.0" fill="#5b1e45"/>
<circle cx="208.4" cy="48.0" r="11.6" fill="#a35f2e"/>
<circle cx="208.4" cy="48.0" r="8.0" fill="#5b1e45"/>
<circle cx="6.5" cy="65.4" r="18.8" fill="#a35f2e"/>
<circle cx="6.5" cy="65.4" r="13.0" fill="#5b1e45"/>
</g>
<g transform="translate(73 -2) scale(0.0928)" fill="none" stroke="#ffffff" stroke-width="22" stroke-linecap="round" stroke-linejoin="round">
<path d="M243 30 C250 120 250 220 200 310 C170 360 90 340 85 280 C85 200 200 150 300 125 L495 108"/>
<path d="M385 35 C390 150 400 300 440 410"/>
<path d="M545 250 C520 215 460 230 455 290 C455 335 520 340 545 280 L540 330"/>
<path d="M555 330 C560 250 600 230 640 250 C680 280 650 340 590 320 M585 230 L575 470"/>
<path d="M700 320 C700 250 740 220 775 245 C810 280 780 335 725 320 M720 230 L705 470"/>
<path d="M820 240 C820 300 870 310 900 280 M940 215 C945 300 930 420 890 480 C860 520 800 480 830 430 C850 400 900 380 945 360"/>
</g>
<text x="0" y="0" transform="translate(33.2 85.2) scale(0.77 1)" font-family="Liberation Sans" font-size="44.6" fill="#ffffff">BIRTHDAY</text>
</svg>
<h3>テキスト</h3>
<p>新しいテキストレイヤーを作った<br>り、テキストテンプレートを使っ<br>て文字入れができます。</p>
<div class="kb">キーボードショートカット (T)</div>
</div>
<div id="fb" class="abs"><span style="position:absolute;left:12px;top:6px">FEEDBACK</span><span style="position:absolute;left:86px;top:6px">X</span></div>
</body></html>
